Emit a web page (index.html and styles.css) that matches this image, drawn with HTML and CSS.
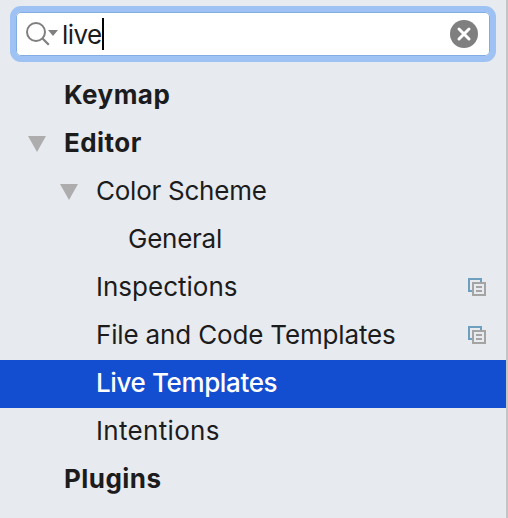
FILE: index.html
```html
<!DOCTYPE html>
<html lang="en">
<head>
<meta charset="utf-8">
<title>Preferences</title>
<link rel="stylesheet" href="styles.css">
</head>
<body>
<aside class="sidebar">
  <div class="search">
    <svg class="lens" width="36" height="30" viewBox="0 0 36 30"><circle cx="10" cy="13" r="9" fill="none" stroke="#7f7f7f" stroke-width="2"/><path d="M16.500 19.500l6.300 6.300" stroke="#7f7f7f" stroke-width="2.200"/><path d="M22 11h10l-5 6z" fill="#7f7f7f"/></svg>
    <span class="query">live</span><i class="caret"></i>
    <svg class="clear" width="28" height="28" viewBox="0 0 28 28"><circle cx="14" cy="14" r="14" fill="#7f7f7f"/><path d="M9 9l10 10m0-10l-10 10" stroke="#fff" stroke-width="3" stroke-linecap="round"/></svg>
  </div>
  <nav class="tree">
    <div class="row l0 bold"><span>Keymap</span></div>
    <div class="row l0 bold"><svg class="arrow" width="18" height="16"><path d="M0 0h18l-9 16z" fill="#adadad"/></svg><span>Editor</span></div>
    <div class="row l1"><svg class="arrow" width="18" height="16"><path d="M0 0h18l-9 16z" fill="#adadad"/></svg><span class="tight">Color Scheme</span></div>
    <div class="row l2"><span class="tight">General</span></div>
    <div class="row l1"><span>Inspections</span><svg class="scope" width="18" height="18"><path d="M5 13H1V1h12v4" fill="none" stroke="#6e9fbf" stroke-width="2"/><path d="M5 5h12v12H5zM8 9h6M8 13h6" fill="none" stroke="#a4a4a4" stroke-width="2"/></svg></div>
    <div class="row l1"><span class="snug">File and Code Templates</span><svg class="scope" width="18" height="18"><path d="M5 13H1V1h12v4" fill="none" stroke="#6e9fbf" stroke-width="2"/><path d="M5 5h12v12H5zM8 9h6M8 13h6" fill="none" stroke="#a4a4a4" stroke-width="2"/></svg></div>
    <div class="row l1 selected"><span>Live Templates</span></div>
    <div class="row l1"><span class="loose">Intentions</span></div>
    <div class="row l0 bold"><span>Plugins</span></div>
  </nav>
</aside>
</body>
</html>
```
FILE: styles.css
```css
* { box-sizing: border-box; }
body { margin: 0; font: 26px/48px Inter, sans-serif; color: #1c1c1c; background: #e7eaef; overflow: hidden; }
.sidebar { height: 518px; padding-top: 6px; border-right: 2px solid #c4c4c4; }
.search { display: flex; align-items: center; height: 56px; margin: 0 10px; padding: 0 12px 0 10px; border: 6px solid #9ec2f4; border-radius: 11px; background: #fff; box-shadow: inset 0 0 0 1px #83ade0; }
.query { padding-top: 2px; letter-spacing: -0.55px; }
.clear { margin-left: auto; }
.caret { width: 2px; height: 32px; background: #000; }
.tree { margin-top: 10px; }
.row { display: flex; align-items: center; height: 48px; }
.row > span { margin-top: -3px; }
.l0 { padding-left: 64px; }
.l1 { padding-left: 96px; }
.l2 { padding-left: 128px; }
.bold { font-weight: 700; letter-spacing: 0.45px; }
.arrow { margin-left: -36px; margin-right: 18px; }
.tight { letter-spacing: -0.25px; }
.snug { letter-spacing: -0.16px; }
.loose { letter-spacing: 0.32px; }
.scope { margin-left: auto; margin-right: 20px; margin-top: -2px; }
.selected { background: #134dd0; color: #fff; font-weight: 500; letter-spacing: -0.38px; }
```
